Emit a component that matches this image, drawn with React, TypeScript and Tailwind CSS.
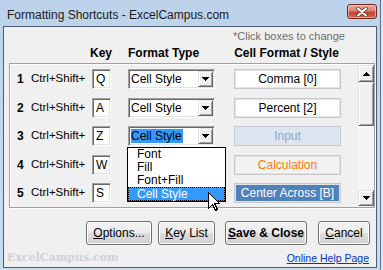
import React from "react";

const sunken =
  "bg-white border border-t-[#a0a0a0] border-l-[#a0a0a0] border-r-white border-b-white shadow-[inset_1px_1px_0_#696969,inset_-1px_-1px_0_#e3e3e3]";
const raised =
  "bg-[#f0f0f0] border border-t-[#e3e3e3] border-l-[#e3e3e3] border-r-[#696969] border-b-[#696969] shadow-[inset_1px_1px_0_#ffffff,inset_-1px_-1px_0_#a0a0a0]";
const winBtn =
  "h-[24px] flex items-center justify-center rounded-[3px] border border-[#707070] bg-[linear-gradient(to_bottom,#f2f2f2_0%,#ebebeb_50%,#dddddd_50%,#cfcfcf_100%)] shadow-[inset_0_0_0_1px_#fcfcfc] text-[12px] text-black";

function Down() {
  return (
    <svg width="7" height="4" viewBox="0 0 7 4" shapeRendering="crispEdges">
      <path d="M0 0h7v1H0z M1 1h5v1H1z M2 2h3v1H2z M3 3h1v1H3z" fill="#000" />
    </svg>
  );
}
function Up() {
  return (
    <svg width="7" height="4" viewBox="0 0 7 4" shapeRendering="crispEdges">
      <path d="M3 0h1v1H3z M2 1h3v1H2z M1 2h5v1H1z M0 3h7v1H0z" fill="#000" />
    </svg>
  );
}

type Row = {
  n: string;
  key: string;
  type: string;
  label: string;
  box: string;
  sel?: boolean;
};

const rows: Row[] = [
  { n: "1", key: "Q", type: "Cell Style", label: "Comma [0]", box: "bg-white text-black border-[#c8c8c8]" },
  { n: "2", key: "A", type: "Cell Style", label: "Percent [2]", box: "bg-white text-black border-[#c8c8c8]" },
  { n: "3", key: "Z", type: "Cell Style", label: "Input", box: "bg-[#dce6f1] text-[#8ea6cc] border-[#c8ccd4]", sel: true },
  { n: "4", key: "W", type: "", label: "Calculation", box: "bg-[#f2f2f2] text-[#fa7d00] border-[#c8c8c8]" },
  { n: "5", key: "S", type: "", label: "Center Across [B]", box: "bg-[#4f81bd] text-white border-[#c8c8c8]" },
];

export default function App() {
  return (
    <div
      className="w-[383px] h-[270px] bg-[#dde8f4] overflow-hidden"
      style={{ fontFamily: '"Liberation Sans", Arial, sans-serif' }}
    >
      <div className="w-[381px] h-[270px] flex flex-col bg-[linear-gradient(to_bottom,#bcd2ea_0%,#c3d8ee_40%,#c9dcf0_100%)] border-r border-[#5a7190]">
        {/* title bar */}
        <div className="h-[26px] flex items-start pl-[7px] pr-[3px]">
          <span className="mt-[7px] text-[12px] leading-[16px] text-[#1b1b1b]">
            Formatting Shortcuts - ExcelCampus.com
          </span>
          <div className="ml-auto mt-[4px] w-[30px] h-[15px] rounded-[3px] border border-[#6e2a1f] bg-[linear-gradient(to_bottom,#e8aa9c_0%,#d88572_45%,#c3462f_55%,#d2654f_100%)] shadow-[inset_0_0_0_1px_rgba(255,220,210,0.55)] flex items-center justify-center">
            <svg width="12" height="10" viewBox="0 0 12 10">
              <path d="M2 1.5L10 8.5M10 1.5L2 8.5" stroke="#5a2418" strokeWidth="3.6" strokeLinecap="round" />
              <path d="M2 1.5L10 8.5M10 1.5L2 8.5" stroke="#ffffff" strokeWidth="2.2" strokeLinecap="round" />
            </svg>
          </div>
        </div>

        {/* client */}
        <div className="ml-[3px] mr-[3px] h-[242px] border border-[#4a5d75] bg-[#f0f0f0] flex flex-col relative">
          <div className="pt-[1px]" />
          <div className="h-[16px] leading-[16px] pl-[229px] text-[11px] text-[#6d6d6d]">
            *Click boxes to change
          </div>
          <div className="mt-[1px] h-[16px] leading-[16px] flex text-[12px] font-bold text-black">
            <span className="ml-[86px] w-[38px]">Key</span>
            <span className="w-[105px]">Format Type</span>
            <span className="w-[107px] text-center">Cell Format / Style</span>
          </div>

          {/* group box */}
          <div className="mt-[2px] ml-[5px] w-[366px] h-[145px] border border-[#a0a0a0] shadow-[inset_1px_1px_0_#ffffff,1px_1px_0_#ffffff] flex">
            <div className="flex-1 flex flex-col gap-[8.5px] pt-[5px] pl-[7px]">
              {rows.map((r) => (
                <div key={r.n} className="h-[20px] flex items-center text-[12px] text-black">
                  <span className="w-[14px] font-bold">{r.n}</span>
                  <span className="w-[61px] text-[11.5px]">Ctrl+Shift+</span>
                  <div className={`${sunken} w-[19px] h-[20px] pl-[3px] leading-[18px]`}>{r.key}</div>
                  <div className={`${sunken} ml-[17px] w-[87px] h-[20px] flex items-center`}>
                    <div className="flex-1 pl-[2px] leading-[14px]">
                      {r.sel ? (
                        <span className="bg-[#3399ff] text-black pr-[1px]">{r.type}</span>
                      ) : (
                        r.type
                      )}
                    </div>
                    <div className={`${raised} w-[15px] h-[16px] mr-[1px] flex items-center justify-center`}>
                      <Down />
                    </div>
                  </div>
                  <div
                    className={`ml-[19px] w-[107px] h-[20px] border ${r.box} text-center leading-[18px] shadow-[inset_0_0_0_1px_#e4e4e4]`}
                  >
                    {r.label}
                  </div>
                </div>
              ))}
            </div>
            {/* scrollbar */}
            <div className="w-[16px] mt-[1px] mb-[1px] flex flex-col bg-[repeating-conic-gradient(#ffffff_0_25%,#ececec_0_50%)] bg-[length:2px_2px]">
              <div className={`${raised} h-[17px] flex items-center justify-center`}>
                <Up />
              </div>
              <div className={`${raised} h-[44px]`} />
              <div className="flex-1" />
              <div className={`${raised} h-[16px] flex items-center justify-center`}>
                <Down />
              </div>
            </div>
          </div>

          {/* buttons */}
          <div className="mt-[13px] flex">
            <div className={`${winBtn} ml-[82px] w-[66px]`}>
              <span><span className="underline">O</span>ptions...</span>
            </div>
            <div className={`${winBtn} ml-[6px] w-[57px]`}>
              <span><span className="underline">K</span>ey List</span>
            </div>
            <div className={`${winBtn} ml-[10px] w-[82px] font-bold`}>
              <span><span className="underline">S</span>ave &amp; Close</span>
            </div>
            <div className={`${winBtn} ml-[11px] w-[52px]`}>
              <span><span className="underline">C</span>ancel</span>
            </div>
          </div>

          {/* footer */}
          <div className="mt-[6px] h-[15px] flex items-center justify-between pl-[3px] pr-[7px]">
            <span
              className="text-[11px] font-bold text-[#d2d2d2]"
              style={{ fontFamily: '"DejaVu Serif", Georgia, serif' }}
            >
              ExcelCampus.com
            </span>
            <span className="text-[10.5px] text-[#0033cc] underline">Online Help Page</span>
          </div>

          {/* dropdown list overlay */}
          <div className="absolute left-[123px] top-[120px] w-[99px] h-[55px] bg-white border border-black flex flex-col text-[12px] text-black">
            <div className="h-[13px] leading-[13px] pl-[9px]">Font</div>
            <div className="h-[13px] leading-[13px] pl-[9px]">Fill</div>
            <div className="h-[13px] leading-[13px] pl-[9px]">Font+Fill</div>
            <div className="h-[14px] leading-[12px] pl-[8px] bg-[#3399ff] text-white border border-dotted border-[#000]">
              Cell Style
            </div>
          </div>

          {/* mouse cursor */}
          <svg
            className="absolute left-[204px] top-[165px]"
            width="13"
            height="20"
            viewBox="0 0 13 20"
            shapeRendering="crispEdges"
          >
            <polygon
              points="0.5,0.5 0.5,16.5 4.5,12.5 7.5,18.5 9.5,17.5 6.5,11.5 11.5,11.5"
              fill="#ffffff"
              stroke="#000000"
              strokeWidth="1"
            />
          </svg>
        </div>
      </div>
    </div>
  );
}
